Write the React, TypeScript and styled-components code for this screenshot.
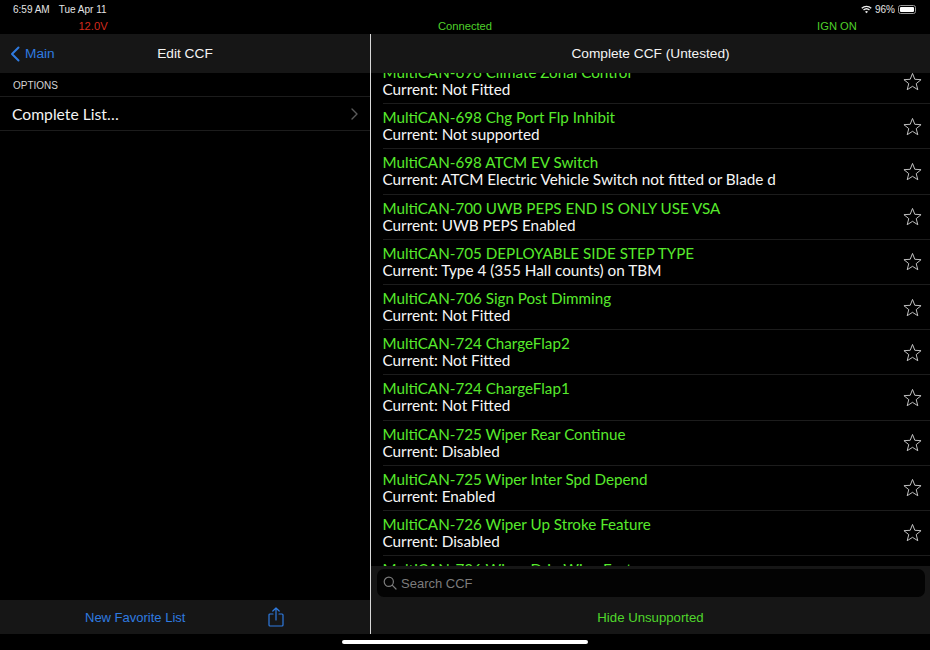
import React from "react";
import styled, { createGlobalStyle } from "styled-components";

const Global = createGlobalStyle`
  html, body { margin: 0; padding: 0; background: #000; }
  body { font-family: "Liberation Sans", Arial, sans-serif; }
  * { box-sizing: border-box; }
`;

const Screen = styled.div`
  width: 930px; height: 650px; background: #000; color: #fff;
  display: flex; flex-direction: column; overflow: hidden;
`;
const StatusBar = styled.div`
  height: 34px; flex: none; position: relative; display: grid;
  grid-template-rows: 19px 15px; font-size: 10px; color: #e4e4e4;
`;
const StatusTop = styled.div`
  display: flex; justify-content: space-between; align-items: center; padding: 0 14px 0 13px;
`;
const StatusLeft = styled.div`display: flex; gap: 9px;`;
const StatusRight = styled.div`display: flex; align-items: center; gap: 3px;`;
const StatusValues = styled.div`
  display: grid; grid-template-columns: 186px 558px 186px; font-size: 11.2px; line-height: 15px; text-align: center;
`;
const StatusValue = styled.span<{ $color: string }>`color: ${p => p.$color};`;
const Panes = styled.div`flex: 1; min-height: 0; display: flex;`;
const LeftPane = styled.div`
  width: 371px; flex: none; display: flex; flex-direction: column; border-right: 1px solid #d8d8d8;
`;
const RightPane = styled.div`flex: 1; min-width: 0; display: flex; flex-direction: column;`;
const NavBar = styled.div`
  height: 39px; flex: none; background: #161616; position: relative;
  display: flex; align-items: center; justify-content: center;
  font-size: 13.7px; font-weight: 400; color: #f4f4f4;
`;
const BackLink = styled.div`
  position: absolute; left: 10px; top: 0; bottom: 0; display: flex; align-items: center; gap: 5px;
  color: #2f7be0; font-size: 13.7px;
`;
const SectionHeader = styled.div`
  height: 24px; flex: none; padding: 4px 0 0 13px; font-size: 10px; line-height: 18px;
  color: #d4d4d4; border-bottom: 1px solid #1c1c1c;
`;
const OptionRow = styled.div`
  height: 34px; flex: none; display: flex; align-items: center; justify-content: space-between;
  padding: 0 12px; border-bottom: 1px solid #1c1c1c;
  font-family: Lato, "Liberation Sans", sans-serif; font-size: 15.7px; font-weight: 400; color: #f4f4f4;
`;
const Spacer = styled.div`flex: 1;`;
const LeftToolbar = styled.div`
  height: 34px; flex: none; background: #161616; display: flex; align-items: center;
  font-size: 13px; color: #2f7be0; padding-left: 85px; gap: 83px;
`;
const ListViewport = styled.div`flex: 1; min-height: 0; overflow: hidden;`;
const List = styled.div`margin-top: -14px;`;
const Row = styled.div`
  height: 45.2px; margin-left: 11.5px; padding: 0 8.5px 0 0; border-bottom: 1px solid #1c1c1c;
  display: flex; align-items: center; justify-content: space-between;
  font-family: Lato, "Liberation Sans", sans-serif;
`;
const RowText = styled.div`display: flex; flex-direction: column; white-space: nowrap;`;
const RowTitle = styled.div`font-size: 15.2px; line-height: 17px; font-weight: 400; color: #57ea2c;`;
const RowSub = styled.div`font-size: 15.3px; line-height: 17px; font-weight: 400; color: #f6f6f6;`;
const SearchBand = styled.div`height: 34px; flex: none; background: #161616; padding: 3px 5px 0 6px;`;
const SearchField = styled.div`
  height: 28px; background: #030303; border-radius: 7px; display: flex; align-items: center;
  gap: 4px; padding-left: 6px; font-size: 13px; color: #7c7c7c;
`;
const RightToolbar = styled.div`
  height: 34px; flex: none; background: #161616; display: flex; align-items: center; justify-content: center;
  font-size: 13.2px; color: #50d62c;
`;
const HomeArea = styled.div`height: 16px; flex: none; display: flex; justify-content: center; padding-top: 6px;`;
const HomeBar = styled.div`width: 246px; height: 4px; border-radius: 2px; background: #fff;`;
const Battery = styled.div`
  width: 18px; height: 9px; border: 1px solid #999; border-radius: 2.5px; padding: 1px; position: relative;
`;
const BatteryFill = styled.div`height: 100%; background: #fff; border-radius: 1px;`;

const rows: [string, string][] = [
  ["MultiCAN-696 Climate Zonal Control", "Current: Not Fitted"],
  ["MultiCAN-698 Chg Port Flp Inhibit", "Current: Not supported"],
  ["MultiCAN-698 ATCM EV Switch", "Current: ATCM Electric Vehicle Switch not fitted or Blade d"],
  ["MultiCAN-700 UWB PEPS END IS ONLY USE VSA", "Current: UWB PEPS Enabled"],
  ["MultiCAN-705 DEPLOYABLE SIDE STEP TYPE", "Current: Type 4 (355 Hall counts) on TBM"],
  ["MultiCAN-706 Sign Post Dimming", "Current: Not Fitted"],
  ["MultiCAN-724 ChargeFlap2", "Current: Not Fitted"],
  ["MultiCAN-724 ChargeFlap1", "Current: Not Fitted"],
  ["MultiCAN-725 Wiper Rear Continue", "Current: Disabled"],
  ["MultiCAN-725 Wiper Inter Spd Depend", "Current: Enabled"],
  ["MultiCAN-726 Wiper Up Stroke Feature", "Current: Disabled"],
  ["MultiCAN-726 Wiper Drip Wipe Feature", "Current: Disabled"],
];

const Star = () => (
  <svg width="19" height="19" viewBox="0 0 24 24" fill="none" stroke="#c8c8c8" strokeWidth="1.2" strokeLinejoin="miter">
    <path d="M12 1.8l2.9 7.4 7.9.5-6.1 5 2 7.7L12 18.1l-6.7 4.3 2-7.7-6.1-5 7.9-.5z" />
  </svg>
);

export default function App() {
  return (
    <Screen>
      <Global />
      <StatusBar>
        <StatusTop>
          <StatusLeft><span>6:59 AM</span><span>Tue Apr 11</span></StatusLeft>
          <StatusRight>
            <svg width="11" height="9" viewBox="0 0 22 18" fill="none" stroke="#eee" strokeWidth="2.6" strokeLinecap="butt">
              <path d="M1.5 6.5a14 14 0 0 1 19 0" />
              <path d="M5 10.2a9 9 0 0 1 12 0" />
              <path d="M11 16.5l-3-3a4.5 4.5 0 0 1 6 0z" fill="#eee" stroke="none" />
            </svg>
            <span>96%</span>
            <Battery><BatteryFill /></Battery>
          </StatusRight>
        </StatusTop>
        <StatusValues>
          <StatusValue $color="#d42a1c">12.0V</StatusValue>
          <StatusValue $color="#4fd02a">Connected</StatusValue>
          <StatusValue $color="#4fd02a">IGN ON</StatusValue>
        </StatusValues>
      </StatusBar>
      <Panes>
        <LeftPane>
          <NavBar>
            <BackLink>
              <svg width="10" height="16" viewBox="0 0 10 16" fill="none" stroke="#2f7be0" strokeWidth="2" strokeLinecap="round" strokeLinejoin="round">
                <path d="M8.5 1.5L2 8l6.5 6.5" />
              </svg>
              Main
            </BackLink>
            Edit CCF
          </NavBar>
          <SectionHeader>OPTIONS</SectionHeader>
          <OptionRow>
            Complete List…
            <svg width="7" height="12" viewBox="0 0 7 12" fill="none" stroke="#5a5a5a" strokeWidth="1.4" strokeLinecap="round" strokeLinejoin="round">
              <path d="M1 1l5 5-5 5" />
            </svg>
          </OptionRow>
          <Spacer />
          <LeftToolbar>
            New Favorite List
            <svg width="16" height="20" viewBox="0 0 16 20" fill="none" stroke="#2f7be0" strokeWidth="1.2" strokeLinecap="round" strokeLinejoin="round">
              <path d="M5 7H2a1 1 0 0 0-1 1v10a1 1 0 0 0 1 1h12a1 1 0 0 0 1-1V8a1 1 0 0 0-1-1h-3" />
              <path d="M8 13V1M4.8 4L8 1l3.2 3" />
            </svg>
          </LeftToolbar>
        </LeftPane>
        <RightPane>
          <NavBar>Complete CCF (Untested)</NavBar>
          <ListViewport>
            <List>
              {rows.map(([title, sub]) => (
                <Row key={title}>
                  <RowText>
                    <RowTitle>{title}</RowTitle>
                    <RowSub>{sub}</RowSub>
                  </RowText>
                  <Star />
                </Row>
              ))}
            </List>
          </ListViewport>
          <SearchBand>
            <SearchField>
              <svg width="14" height="14" viewBox="0 0 14 14" fill="none" stroke="#7c7c7c" strokeWidth="1.2" strokeLinecap="round">
                <circle cx="5.8" cy="5.8" r="4.6" />
                <path d="M9.2 9.2l3.8 3.8" />
              </svg>
              Search CCF
            </SearchField>
          </SearchBand>
          <RightToolbar>Hide Unsupported</RightToolbar>
        </RightPane>
      </Panes>
      <HomeArea><HomeBar /></HomeArea>
    </Screen>
  );
}
